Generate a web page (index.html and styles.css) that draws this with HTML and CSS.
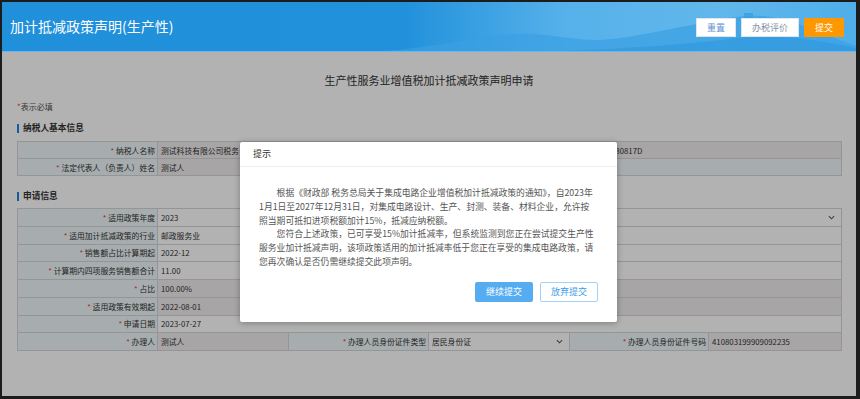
FILE: index.html
```html
<!DOCTYPE html>
<html lang="zh-CN">
<head>
    <meta charset="UTF-8">
    <meta name="viewport" content="width=device-width, initial-scale=1.0">
    <title>加计抵减政策声明(生产性)</title>
    <link rel="stylesheet" href="styles.css">
</head>
<body>
<div class="frame">
    <header class="topbar">
        <svg class="topbar-bg" viewBox="0 0 854 49" preserveAspectRatio="none">
            <path d="M380 49 C430 46 470 35 510 32 C545 30 565 38 595 38 C625 37 650 30 690 23 C715 18 735 13 760 14 C790 16 825 34 854 44 L854 49 Z" fill="#3b9fe2" opacity="0.7"/>
            <path d="M560 49 C620 47 690 42 735 36 C775 31 815 38 854 46 L854 49 Z" fill="#2e97dd" opacity="0.6"/>
            <rect x="742" y="11" width="9" height="6" fill="#3b9fe2" opacity="0.8"/>
        </svg>
        <h1 class="topbar-title">加计抵减政策声明(生产性)</h1>
        <div class="topbar-actions">
            <button class="btn btn-reset">重置</button>
            <button class="btn btn-eval">办税评价</button>
            <button class="btn btn-submit">提交</button>
        </div>
    </header>

    <main class="content">
        <div class="page">
            <h2 class="page-title">生产性服务业增值税加计抵减政策声明申请</h2>
            <p class="required-tip"><span class="star">*</span>表示必填</p>

            <h3 class="section-title">纳税人基本信息</h3>
            <table class="form-table basic">
                <colgroup>
                    <col style="width:140px"><col style="width:131px"><col style="width:140px">
                    <col style="width:141px"><col style="width:139px"><col style="width:133px">
                </colgroup>
                <tr>
                    <td class="label"><span class="star">*</span> 纳税人名称</td>
                    <td class="ro" colspan="2">测试科技有限公司税务</td>
                    <td class="label"><span class="star">*</span> 纳税人识别号</td>
                    <td class="ro" colspan="2">914101MAG80817D</td>
                </tr>
                <tr>
                    <td class="label"><span class="star">*</span> 法定代表人（负责人）姓名</td>
                    <td class="ro" colspan="2">测试人</td>
                    <td class="label" colspan="3"></td>
                </tr>
            </table>

            <h3 class="section-title second">申请信息</h3>
            <table class="form-table apply">
                <colgroup>
                    <col style="width:140px"><col style="width:131px"><col style="width:140px">
                    <col style="width:141px"><col style="width:139px"><col style="width:133px">
                </colgroup>
                <tr>
                    <td class="label"><span class="star">*</span> 适用政策年度</td>
                    <td colspan="5">
                        <div class="select-val"><span>2023</span>
                            <svg class="arrow" viewBox="0 0 8 5"><path d="M1 1 L4 4 L7 1" fill="none" stroke="#555" stroke-width="1.2"/></svg>
                        </div>
                    </td>
                </tr>
                <tr>
                    <td class="label"><span class="star">*</span> 适用加计抵减政策的行业</td>
                    <td colspan="5">邮政服务业</td>
                </tr>
                <tr>
                    <td class="label"><span class="star">*</span> 销售额占比计算期起</td>
                    <td colspan="5">2022-12</td>
                </tr>
                <tr>
                    <td class="label"><span class="star">*</span> 计算期内四项服务销售额合计</td>
                    <td colspan="5">11.00</td>
                </tr>
                <tr>
                    <td class="label"><span class="star">*</span> 占比</td>
                    <td class="ro" colspan="5">100.00%</td>
                </tr>
                <tr>
                    <td class="label"><span class="star">*</span> 适用政策有效期起</td>
                    <td class="ro" colspan="5">2022-08-01</td>
                </tr>
                <tr>
                    <td class="label"><span class="star">*</span> 申请日期</td>
                    <td colspan="5">2023-07-27</td>
                </tr>
                <tr>
                    <td class="label"><span class="star">*</span> 办理人</td>
                    <td class="ro">测试人</td>
                    <td class="label"><span class="star">*</span> 办理人员身份证件类型</td>
                    <td>
                        <div class="select-val"><span>居民身份证</span>
                            <svg class="arrow" viewBox="0 0 8 5"><path d="M1 1 L4 4 L7 1" fill="none" stroke="#555" stroke-width="1.2"/></svg>
                        </div>
                    </td>
                    <td class="label"><span class="star">*</span> 办理人员身份证件号码</td>
                    <td class="ro">410803199909092235</td>
                </tr>
            </table>
        </div>

        <div class="mask"></div>

        <div class="dialog">
            <div class="dialog-head">提示</div>
            <div class="dialog-body">
                <p>根据《财政部 税务总局关于集成电路企业增值税加计抵减政策的通知》，自2023年<br>1月1日至2027年12月31日，对集成电路设计、生产、封测、装备、材料企业，允许按<br>照当期可抵扣进项税额加计15%，抵减应纳税额。</p>
                <p>您符合上述政策，已可享受15%加计抵减率，但系统监测到您正在尝试提交生产性<br>服务业加计抵减声明，该项政策适用的加计抵减率低于您正在享受的集成电路政策，请<br>您再次确认是否仍需继续提交此项声明。</p>
            </div>
            <div class="dialog-foot">
                <button class="dbtn dbtn-primary">继续提交</button>
                <button class="dbtn dbtn-plain">放弃提交</button>
            </div>
        </div>
    </main>
</div>
</body>
</html>
```

FILE: styles.css
```css
body {
    margin: 0;
    font-family: "Noto Sans CJK SC", "Liberation Sans", sans-serif;
}

.frame {
    width: 860px;
    height: 399px;
    box-sizing: border-box;
    border: solid #1c1c1c;
    border-width: 2px 4px 3px 2px;
    display: flex;
    flex-direction: column;
    overflow: hidden;
}

/* top bar */
.topbar {
    position: relative;
    flex-shrink: 0;
    height: 49px;
    border-bottom: 1px solid #6ab6ea;
    display: flex;
    align-items: center;
    justify-content: space-between;
    padding: 0 12px 0 8px;
    background: linear-gradient(90deg, #2090db 0%, #2191db 47%, #56b1ea 66%, #61b7eb 84%, #4eaee9 100%);
}

.topbar-bg {
    position: absolute;
    left: 0;
    top: 0;
    width: 100%;
    height: 100%;
}

.topbar-title {
    position: relative;
    margin: 0;
    font-size: 14px;
    font-weight: normal;
    color: #fff;
    margin-top: -1px;
}

.topbar-actions {
    position: relative;
    display: flex;
    gap: 5px;
    margin-top: 1px;
}

.btn {
    height: 19px;
    padding: 0;
    font-family: inherit;
    font-size: 9px;
    border: 1px solid #dbe6ef;
    background: #fff;
    cursor: pointer;
}

.btn-reset {
    width: 40px;
    color: #5f93cf;
}

.btn-eval {
    width: 58px;
    color: #8193a8;
}

.btn-submit {
    width: 40px;
    background: #ff9700;
    border-color: #ff9700;
    color: #fff;
}

/* page */
.content {
    position: relative;
    flex: 1;
    background: #fff;
}

.page {
    padding: 0 15px;
}

.page-title {
    margin: 0;
    padding-top: 20px;
    font-size: 11px;
    line-height: 16px;
    font-weight: normal;
    text-align: center;
    color: #333;
}

.required-tip {
    margin: 13px 0 0;
    font-size: 8px;
    line-height: 12px;
    color: #555;
}

.star {
    color: #f03c3c;
}

.section-title {
    margin: 8px 0 0;
    display: flex;
    align-items: center;
    gap: 4px;
    font-size: 8.7px;
    line-height: 14px;
    font-weight: bold;
    color: #333;
}

.section-title::before {
    content: "";
    width: 2px;
    height: 9px;
    background: #1c86e0;
}

.section-title.second {
    margin-top: 13px;
}

.form-table {
    width: 100%;
    margin-top: 6px;
    border-collapse: collapse;
    table-layout: fixed;
    font-size: 7.8px;
    color: #333;
}

.form-table.apply {
    margin-top: 5px;
}

.form-table td {
    border: 1px solid #d6d6d6;
    padding: 0 3px;
    white-space: nowrap;
    overflow: hidden;
    background: #fff;
}

.basic td {
    height: 16px;
}

.apply td {
    height: 16.75px;
}

.form-table td.label {
    background: #eff8f9;
    text-align: right;
    padding-right: 2px;
}

.form-table td.ro {
    background: #f0ecec;
}

.select-val {
    display: flex;
    align-items: center;
    justify-content: space-between;
}

.arrow {
    width: 7px;
    height: 5px;
    margin-right: 3px;
}

/* modal */
.mask {
    position: absolute;
    inset: 0;
    background: rgba(0, 0, 0, 0.3);
}

.dialog {
    position: absolute;
    left: 238px;
    top: 90px;
    width: 377px;
    height: 180px;
    background: #fff;
    border-radius: 2px;
    box-shadow: 0 1px 6px rgba(0, 0, 0, 0.3);
}

.dialog-head {
    box-sizing: border-box;
    height: 25px;
    padding-left: 13px;
    border-bottom: 1px solid #eee;
    font-size: 9px;
    line-height: 24px;
    color: #333;
}

.dialog-body {
    padding: 19px 19px 0;
    font-size: 8.8px;
    line-height: 13.8px;
    color: #555;
    white-space: nowrap;
}

.dialog-body p {
    margin: 0;
    text-indent: 2em;
}

.dialog-foot {
    display: flex;
    justify-content: flex-end;
    gap: 7px;
    padding: 13px 19px 0;
}

.dbtn {
    width: 58px;
    height: 20px;
    padding: 0;
    font-family: inherit;
    font-size: 9px;
    border-radius: 2px;
    cursor: pointer;
}

.dbtn-primary {
    background: #55acf0;
    border: 1px solid #55acf0;
    color: #fff;
}

.dbtn-plain {
    background: #fff;
    border: 1px solid #a3d2f6;
    color: #3c9ce8;
}
```
